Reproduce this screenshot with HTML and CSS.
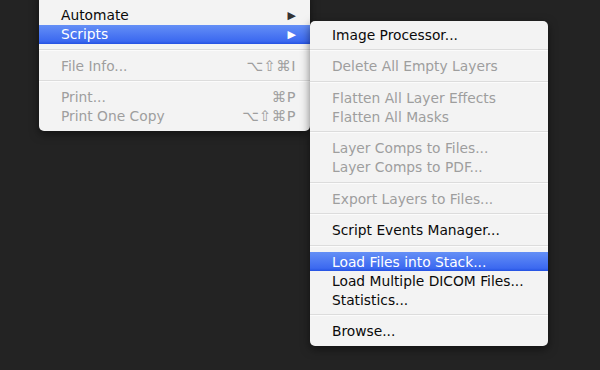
FILE: index.html
```html
<!DOCTYPE html>
<html lang="en">
<head>
    <meta charset="UTF-8">
    <title>File menu - Scripts</title>
    <link rel="stylesheet" href="styles.css">
</head>
<body>
    <div class="desktop">
        <!-- File menu (top part scrolled off) -->
        <div class="menu menu-main">
            <div class="sep sep-top"></div>
            <div class="item">
                <span class="label">Automate</span>
                <span class="arrow">&#9654;</span>
            </div>
            <div class="item active">
                <span class="label">Scripts</span>
                <span class="arrow">&#9654;</span>
            </div>
            <div class="sep"></div>
            <div class="item disabled">
                <span class="label">File Info...</span>
                <span class="keys">&#8997;&#8679;&#8984;I</span>
            </div>
            <div class="sep"></div>
            <div class="item disabled">
                <span class="label">Print...</span>
                <span class="keys">&#8984;P</span>
            </div>
            <div class="item disabled">
                <span class="label">Print One Copy</span>
                <span class="keys">&#8997;&#8679;&#8984;P</span>
            </div>
        </div>

        <!-- Scripts submenu -->
        <div class="menu menu-sub">
            <div class="item">Image Processor...</div>
            <div class="sep"></div>
            <div class="item disabled">Delete All Empty Layers</div>
            <div class="sep"></div>
            <div class="item disabled">Flatten All Layer Effects</div>
            <div class="item disabled">Flatten All Masks</div>
            <div class="sep"></div>
            <div class="item disabled">Layer Comps to Files...</div>
            <div class="item disabled">Layer Comps to PDF...</div>
            <div class="sep"></div>
            <div class="item disabled">Export Layers to Files...</div>
            <div class="sep"></div>
            <div class="item">Script Events Manager...</div>
            <div class="sep"></div>
            <div class="item active">Load Files into Stack...</div>
            <div class="item">Load Multiple DICOM Files...</div>
            <div class="item">Statistics...</div>
            <div class="sep"></div>
            <div class="item">Browse...</div>
        </div>
    </div>
</body>
</html>
```

FILE: styles.css
```css
html, body {
    margin: 0;
    height: 100%;
    background-color: #232323;
    overflow: hidden;
}
.desktop {
    display: flex;
    align-items: flex-start;
    padding-left: 39px;
    font-family: "DejaVu Sans", "Liberation Sans", sans-serif;
    font-size: 13.8px;
    color: #0a0a0a;
}
.menu {
    background-color: #f3f3f3;
    box-shadow: 0 3px 10px rgba(0, 0, 0, 0.5);
}
.menu-main {
    width: 271px;
    margin-top: -7px;
    padding-bottom: 5px;
    border-radius: 0 0 5px 5px;
}
.menu-sub {
    width: 238px;
    margin-top: 21px;
    padding: 4px 0 5px;
    border-radius: 5px;
    position: relative; /* sits over the edge of the parent menu */
}
.item {
    display: flex;
    align-items: center;
    height: 19px;
    padding: 0 14px 0 22px;
    white-space: nowrap;
}
.item .label {
    flex: 1;
}
.item.disabled {
    color: #9e9e9e;
}
.item.active {
    color: #fff;
    background: linear-gradient(#648ff6, #3c69f0 85%, #2452e2);
}
.arrow {
    font-size: 11px;
    color: #333;
    margin-right: 0;
}
.item.active .arrow {
    color: #fff;
}
.keys {
    font-size: 14.5px;
    letter-spacing: 0.5px;
}
.sep {
    height: 12.5px;
    display: flex;
    flex-direction: column;
    justify-content: center;
}
.sep::before {
    content: "";
    display: block;
    height: 1px;
    background-color: #dcdcdc;
    border-bottom: 1px solid #fbfbfb;
}
```
